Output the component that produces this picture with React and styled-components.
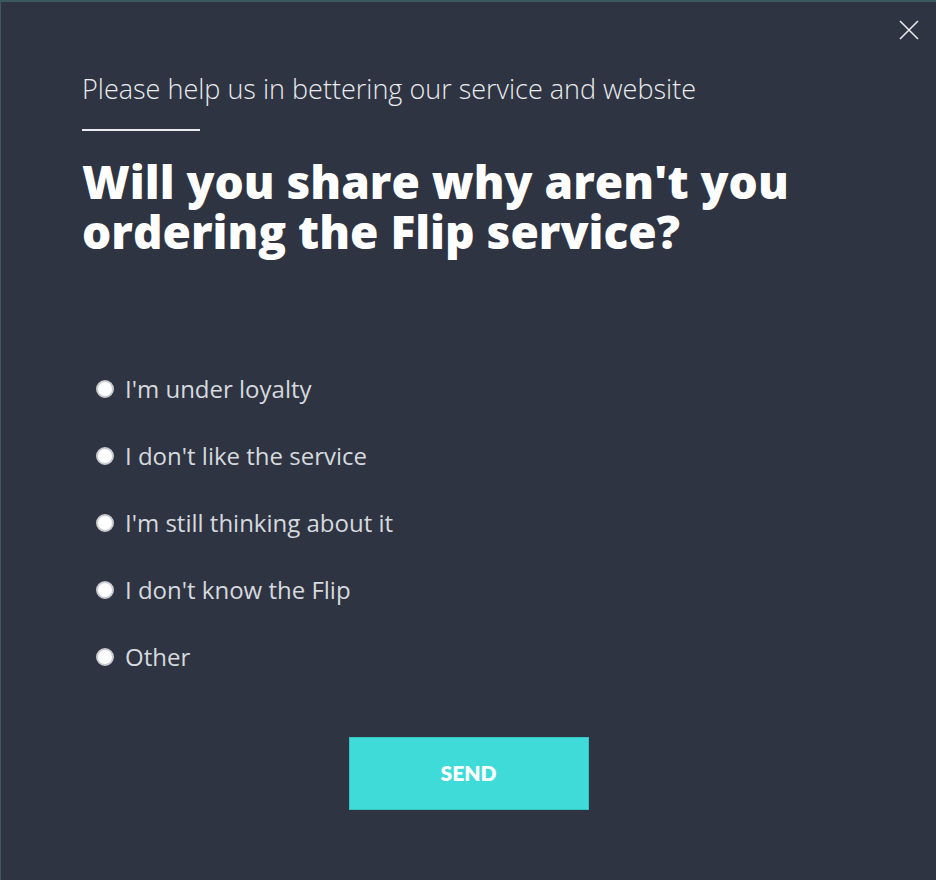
import React, { useState } from 'react';
import styled, { createGlobalStyle } from 'styled-components';

const GlobalStyle = createGlobalStyle`
  html, body {
    margin: 0;
    padding: 0;
    background: #2e3442;
  }
  body {
    font-family: "Open Sans", Lato, sans-serif;
  }
`;

const options = [
  "I'm under loyalty",
  "I don't like the service",
  "I'm still thinking about it",
  "I don't know the Flip",
  'Other',
];

const App = () => {
  const [choice, setChoice] = useState(null);

  return (
    <>
      <GlobalStyle />
      <Modal>
        <CloseButton aria-label="Close">
          <svg width="20" height="20" viewBox="0 0 20 20">
            <path d="M1 1L19 19M19 1L1 19" stroke="#e6e8ec" strokeWidth="1.6" fill="none" />
          </svg>
        </CloseButton>
        <Subtitle>Please help us in bettering our service and website</Subtitle>
        <Divider />
        <Title>
          Will you share why aren't you
          <br />
          ordering the Flip service?
        </Title>
        <OptionList>
          {options.map((o, i) => (
            <Option key={o} onClick={() => setChoice(i)}>
              <Radio $checked={choice === i} />
              <span>{o}</span>
            </Option>
          ))}
        </OptionList>
        <ButtonRow>
          <SendButton>SEND</SendButton>
        </ButtonRow>
      </Modal>
    </>
  );
};

export default App;

const Modal = styled.div`
  position: relative;
  box-sizing: border-box;
  width: 936px;
  height: 880px;
  background: #2e3442;
  border-top: 2px solid #3c5a5e;
  border-left: 1px solid #3c5a5e;
  padding: 70px 0 0 81px;
  color: #fff;
`;

const CloseButton = styled.button`
  position: absolute;
  top: 17px;
  right: 16px;
  width: 22px;
  height: 22px;
  padding: 0;
  border: 0;
  background: none;
  display: flex;
  align-items: center;
  justify-content: center;
  cursor: pointer;
`;

const Subtitle = styled.p`
  margin: 0;
  font-size: 27px;
  font-weight: 300;
  line-height: 34px;
  color: #e9ebee;
`;

const Divider = styled.div`
  width: 118px;
  height: 2px;
  background: #e9ebee;
  margin-top: 23px;
`;

const Title = styled.h1`
  margin: 25px 0 0;
  font-size: 46px;
  font-weight: 800;
  line-height: 50px;
  color: #fff;
`;

const OptionList = styled.div`
  display: flex;
  flex-direction: column;
  gap: 37px;
  margin: 118px 0 0 14px;
`;

const Option = styled.label`
  display: flex;
  align-items: center;
  gap: 11px;
  font-size: 24px;
  line-height: 30px;
  color: #d6d9de;
  cursor: pointer;
`;

const Radio = styled.span`
  box-sizing: border-box;
  width: 18px;
  height: 18px;
  border-radius: 50%;
  background: #fff;
  border: 2px solid ${(p) => (p.$checked ? '#3fdbd9' : '#c9cbcf')};
`;

const ButtonRow = styled.div`
  display: flex;
  justify-content: center;
  margin: 65px 0 0 -81px;
`;

const SendButton = styled.button`
  width: 240px;
  height: 73px;
  padding: 0 0 3px;
  border: 1px solid #37c4c2;
  background: #3fdbd9;
  color: #fff;
  font-family: Lato, sans-serif;
  font-size: 21px;
  font-weight: 800;
  cursor: pointer;
`;
